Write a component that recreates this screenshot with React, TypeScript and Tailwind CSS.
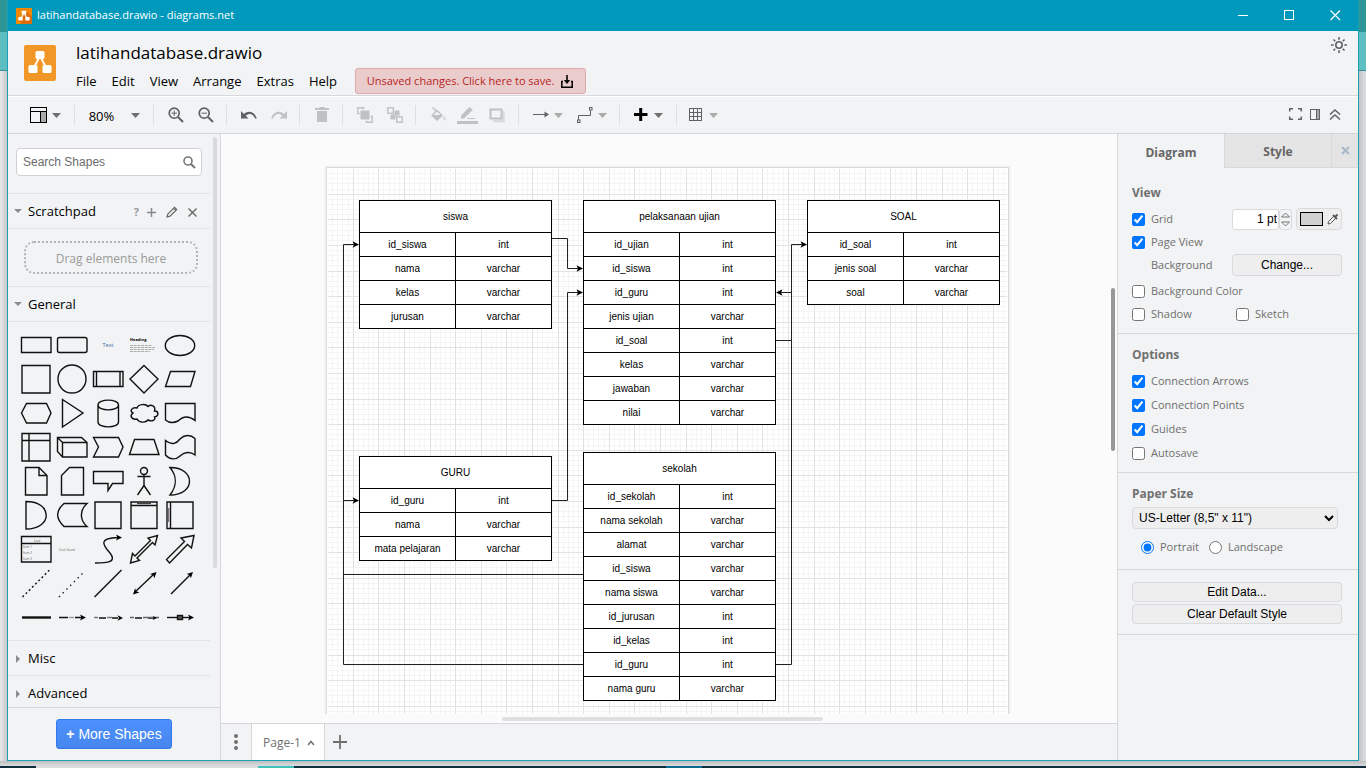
import React, { ReactNode } from "react";

const SANS = "font-['Open_Sans','Noto_Sans',sans-serif]";
const ARIAL = "font-['Liberation_Sans',Arial,sans-serif]";

/* ---------- window chrome ---------- */

function Logo({ className, small }: { className: string; small?: boolean }) {
  return (
    <svg className={className} viewBox="0 0 32 36" preserveAspectRatio="none" aria-hidden="true">
      <rect width="32" height="36" rx={small ? 0 : 2} fill={small ? "#f08705" : "#f19728"} />
      {small && <path d="M20 7L32 19V36H12L5 28L14 20Z" fill="#df6c0c" />}
      <path d="M15 13L9 24M17 13L23 24" stroke="#fff" strokeWidth={small ? 2.4 : 1.8} fill="none" />
      <rect x="11.500" y="6" width="9" height="8" rx="1.500" fill="#fff" />
      <rect x="4.500" y="20" width="9" height="8" rx="1.500" fill="#fff" />
      <rect x="18.500" y="20" width="9" height="8" rx="1.500" fill="#fff" />
    </svg>
  );
}

function TitleBar() {
  return (
    <div className="flex h-[31px] shrink-0 items-center bg-[#0099bc] text-white">
      <Logo small className="ml-2 h-4 w-4" />
      <span className="ml-[5px] flex-1 text-[11px]">latihandatabase.drawio - diagrams.net</span>
      <button aria-label="Minimize" className="flex h-full w-[46px] items-center justify-center">
        <svg width="11" height="11"><path d="M0 5.500H10" stroke="#fff" /></svg>
      </button>
      <button aria-label="Maximize" className="flex h-full w-[46px] items-center justify-center">
        <svg width="11" height="11"><rect x=".5" y=".5" width="9" height="9" fill="none" stroke="#fff" /></svg>
      </button>
      <button aria-label="Close" className="flex h-full w-[46px] items-center justify-center">
        <svg width="11" height="11"><path d="M.5 .5L10 10M10 .5L.5 10" stroke="#fff" strokeWidth="1.200" /></svg>
      </button>
    </div>
  );
}

function Header() {
  return (
    <header className="flex h-[65px] shrink-0 border-b border-[#d6d8dc] pl-4">
      <Logo className="mt-[14px] h-9 w-8" />
      <div className="ml-5 flex-1 pt-[10px]">
        <h1 className="h-6 text-[17px] leading-6 text-black">latihandatabase.drawio</h1>
        <nav className="mt-[3px] flex h-[26px] items-center gap-[15px] text-[13px] text-black">
          {["File", "Edit", "View", "Arrange", "Extras", "Help"].map((m) => (
            <button key={m} className="pt-[2px]">{m}</button>
          ))}
          <button className="ml-[3px] flex h-[26px] w-[231px] items-center justify-center gap-[6px] rounded-[3px] border border-[#dfa9ad] bg-[#ebcccd] pt-px text-[11px] text-[#b62623]">
            Unsaved changes. Click here to save.
            <svg width="14" height="14" className="text-black" fill="none" stroke="currentColor" aria-hidden="true">
              <path d="M3 6.500H1.800V12.200H12.200V6.500H11" strokeWidth="1.500" />
              <path d="M7 0V6" strokeWidth="1.600" />
              <path d="M3.800 5H10.200L7 9Z" fill="currentColor" stroke="none" />
            </svg>
          </button>
        </nav>
      </div>
      <button aria-label="Theme" className="mt-1 mr-2 h-5 w-5 self-start text-[#5f6368]">
        <svg width="18" height="18" viewBox="-9 -9 18 18" fill="none" stroke="currentColor" strokeWidth="1.600">
          <circle r="3.200" />
          <path d="M0-8V-5.300M0 8V5.300M-8 0H-5.300M8 0H5.300M-5.500-5.500L-3.800-3.800M5.500 5.500L3.800 3.800M-5.500 5.500L-3.800 3.800M5.500-5.500L3.800-3.800" />
        </svg>
      </button>
    </header>
  );
}

/* ---------- toolbar ---------- */

function Caret({ color = "#707070" }: { color?: string }) {
  return (
    <svg width="9" height="5" viewBox="0 0 9 5" className="shrink-0" aria-hidden="true">
      <path d="M0 0H9L4.500 5Z" fill={color} />
    </svg>
  );
}

function Group({ className, children }: { className: string; children: ReactNode }) {
  return <div className={`flex h-5 items-center border-r border-[#dcdee0] ${className}`}>{children}</div>;
}

function Tool({ label, w = 16, color = "#5f6368", caret, children }: { label: string; w?: number; color?: string; caret?: string; children: ReactNode }) {
  return (
    <button aria-label={label} className="flex items-center gap-[5px]">
      <svg width={w} height="16" viewBox={`0 0 ${w} 16`} className="overflow-visible" style={{ color }} fill="none" stroke="currentColor">{children}</svg>
      {caret && <Caret color={caret} />}
    </button>
  );
}

const OFF = "#c0c1c2";

function Toolbar() {
  return (
    <div className="flex h-[38px] shrink-0 items-center border-t border-b border-t-white border-b-[#d2d4d8]">
      <Group className="w-[67px] pl-[22px]">
        <Tool label="View" w={17} color="#000" caret="#707070">
          <rect x=".5" y=".5" width="16" height="15" />
          <path d="M0 4.500H17" />
          <rect x="11" y="5" width="5" height="10" fill="#aaa" stroke="none" />
          <path d="M10.500 4V16" />
        </Tool>
      </Group>
      <Group className="w-[79px] pl-[13px]">
        <button className="flex items-center gap-4 text-[13px] text-black">
          <span className="w-[27px] pt-[3px]">80%</span>
          <Caret />
        </button>
      </Group>
      <Group className="w-[73px] gap-[14px] pl-[14px]">
        <Tool label="Zoom in">
          <circle cx="6.200" cy="6.200" r="5" strokeWidth="1.700" /><path d="M10 10L15 15" strokeWidth="2" /><path d="M3.500 6.200H9M6.200 3.500V9" />
        </Tool>
        <Tool label="Zoom out">
          <circle cx="6.200" cy="6.200" r="5" strokeWidth="1.700" /><path d="M10 10L15 15" strokeWidth="2" /><path d="M3.500 6.200H9" />
        </Tool>
      </Group>
      <Group className="w-[73px] gap-[14px] pl-[14px]">
        <Tool label="Undo">
          <path d="M0 4V11.500H7.500L4.800 8.800C8 6 12 6.500 14.200 11.800L15.800 11.200C13.500 4.500 7.500 3 2.900 7Z" fill="currentColor" stroke="none" />
        </Tool>
        <Tool label="Redo" color={OFF}>
          <path d="M16 4V11.500H8.500L11.200 8.800C8 6 4 6.500 1.800 11.800L.2 11.200C2.500 4.500 8.500 3 13.100 7Z" fill="currentColor" stroke="none" />
        </Tool>
      </Group>
      <Group className="w-[43px] pl-[14px]">
        <Tool label="Delete" color={OFF}>
          <path d="M1 1H5L6 0H10L11 1H15V3H1ZM3 4H13V15H3Z" fill="currentColor" stroke="none" />
        </Tool>
      </Group>
      <Group className="w-[73px] gap-[14px] pl-[14px]">
        <Tool label="To front" color={OFF}>
          <rect x="3.500" y="3.500" width="9" height="9" fill="currentColor" stroke="none" />
          <path d="M2.500 6.500H.8V.8H6.500V2.500M9.500 13.500V15.200H15.200V9.500H13.500" strokeWidth="1.400" />
        </Tool>
        <Tool label="To back" color={OFF}>
          <path d="M3.500 7.500H7.500V3.500H12.500V8.500H8.500V12.500H3.500Z" fill="currentColor" stroke="none" />
          <rect x=".8" y=".8" width="5.500" height="5.500" strokeWidth="1.400" fill="#f1f3f4" />
          <rect x="9.700" y="9.700" width="5.500" height="5.500" strokeWidth="1.400" fill="#f1f3f4" />
        </Tool>
      </Group>
      <Group className="w-[103px] gap-[11px] pl-[14px]">
        <Tool label="Fill color" color={OFF}>
          <path d="M7 2.500L13 8.500L7 14L1.200 8.500Z" fill="currentColor" stroke="none" />
          <path d="M2.500 .5L8 5.500" strokeWidth="1.500" />
          <path d="M3.500 8H10.500L7 4.500Z" fill="#f1f3f4" stroke="none" />
          <path d="M14.200 8.500Q17.500 12.500 14.200 13.500Q11.500 12.500 14.200 8.500Z" fill="#d8d9da" stroke="none" />
        </Tool>
        <Tool label="Line color" w={21} color={OFF}>
          <path d="M4 11.500V8.500L12.500 0L15.800 3L7 11.500Z" fill="currentColor" stroke="none" /><path d="M10 11.500H18" /><path d="M0 15.500H21" strokeWidth="3" />
        </Tool>
        <Tool label="Shadow" color={OFF}>
          <path d="M4 14H14.500V4" stroke="#d8d9da" strokeWidth="2.400" /><rect x="1.500" y="2.500" width="11" height="9" strokeWidth="2" />
        </Tool>
      </Group>
      <Group className="w-[101px] gap-[14px] pl-[14px]">
        <Tool label="Connection" caret="#ababab"><path d="M0 7.500H12" /><path d="M11.500 4.500L16 7.500L11.500 10.500Z" fill="currentColor" stroke="none" /></Tool>
        <Tool label="Waypoints" caret="#ababab"><path d="M1.500 13V8.500H13.500V3.500" /><rect x=".5" y="13" width="2.500" height="2.500" /><rect x="12.500" y=".5" width="2.500" height="2.500" /></Tool>
      </Group>
      <Group className="w-[57px] pl-[14px]">
        <Tool label="Insert" w={15} color="#000" caret="#707070"><path d="M0 7.500H13.500M6.700 1V14" strokeWidth="3" /></Tool>
      </Group>
      <div className="flex flex-1 items-center pl-3">
        <Tool label="Table" w={15} caret="#ababab"><rect x=".5" y="1.500" width="12" height="12" /><path d="M0 5.500H13M0 9.500H13M4.500 1V14M8.500 1V14" /></Tool>
      </div>
      <div className="flex items-center gap-2 pr-[17px]">
        <Tool label="Fullscreen" w={13}><path d="M.7 4.500V1.700H4M9 1.700H12.300V4.500M12.300 9.500V12.300H9M4 12.300H.7V9.500" strokeWidth="1.500" /></Tool>
        <Tool label="Format panel" w={11}><rect x="7" y="3" width="3" height="9" fill="#aaa" stroke="none" /><rect x=".5" y="2.500" width="9" height="10" /><path d="M6.500 3V12" /></Tool>
        <Tool label="Collapse" w={12}><path d="M1 7.500L6 3L11 7.500M1 12.500L6 8L11 12.500" strokeWidth="1.500" /></Tool>
      </div>
    </div>
  );
}

/* ---------- shapes sidebar ---------- */

const arrowTip = (x: number, y: number, a: number, s = 1) => (
  <path d="M0 0L-6-3L-4.500 0L-6 3Z" fill="#000" stroke="none" transform={`translate(${x} ${y}) rotate(${a}) scale(${s})`} />
);

const SHAPES: [string, ReactNode][] = [
  ["Rectangle", <path d="M3.500 9.500H33V24.500H3.500Z" />],
  ["Rounded rectangle", <rect x="3.500" y="9.500" width="29.500" height="15" rx="2" />],
  ["Text", <text x="18" y="19" fontSize="5.500" textAnchor="middle" fill="#45659b" stroke="none">Text</text>],
  ["Textbox", <g stroke="none"><text x="4" y="13" fontSize="4" fontWeight="700" fill="#000">Heading</text><path d="M4 17.500H26M4 19.500H29M4 21.500H28M4 23.500H24" stroke="#999" strokeWidth=".8" strokeDasharray="3 .7" /></g>],
  ["Ellipse", <ellipse cx="18" cy="17.500" rx="14.700" ry="10" />],
  ["Square", <path d="M4 3.500H32V31H4Z" />],
  ["Circle", <circle cx="18" cy="17" r="14" />],
  ["Process", <path d="M3.500 9.500H33V24.500H3.500ZM6.500 9.500V24.500M30 9.500V24.500" />],
  ["Diamond", <path d="M18 3.500L32 17L18 31L4 17Z" />],
  ["Parallelogram", <path d="M8.500 9.500H33L28.500 24.500H3.500Z" />],
  ["Hexagon", <path d="M8.500 7.500H28.500L33 17L28.500 27H8.500L3.500 17Z" />],
  ["Triangle", <path d="M8.500 3.500L29 17L8.500 31Z" />],
  ["Cylinder", <path d="M8 9C8 2.500 28.500 2.500 28.500 9V26C28.500 32.500 8 32.500 8 26ZM8 9C8 15.500 28.500 15.500 28.500 9" />],
  ["Cloud", <path d="M11 12C6 11 3 15 7 17C3 20 6 24 11 23C13 27 20 27 22 24C26 26 30 24 28.500 21C33 20 33 15 28.500 15C30 10 25 8 22 10.500C20 7.500 12 8 11 12Z" />],
  ["Document", <path d="M3.500 7.500H33V24.500C25 18 19 22 16 25C12 27 7 27 3.500 24Z" />],
  ["Internal storage", <path d="M4 3.500H32V31H4ZM4 10.500H32M11 3.500V31" />],
  ["Cube", <path d="M3.500 7.500H27.500L33 12.500V27H8.500L3.500 21.500ZM3.500 7.500L8.500 12.500V27M8.500 12.500H33" />],
  ["Step", <path d="M3.500 7.500H28.500L33 17L28.500 27H3.500L8.500 17Z" />],
  ["Trapezoid", <path d="M8.500 9.500H28L33 24.500H3.500Z" />],
  ["Tape", <path d="M3.500 10.500C10 16 15 13 18 9C22 5 28 4 33 8.500V25C28 21 22 22 18 26C14 30 8 30 3.500 25Z" />],
  ["Note", <path d="M7.500 3.500H21L29 11.500V31H7.500ZM21 3.500V11.500H29" />],
  ["Card", <path d="M15.500 3.500H29.500V31H7.500V11.500Z" />],
  ["Callout", <path d="M3.500 7.500H33V19.500H22.500L18 26.500V19.500H3.500Z" />],
  ["Actor", <path d="M18 10.500V21.500M11.500 12.500H24.500M18 21.500L11.500 31M18 21.500L24.500 31M21.500 7A3.500 3.500 0 1 1 14.500 7A3.500 3.500 0 1 1 21.500 7" />],
  ["Or", <path d="M8 3.500C34 3.500 34 31 8 31C15 22 15 12 8 3.500Z" />],
  ["And", <path d="M8 3.500C35 3.500 35 31 8 31Z" />],
  ["Data storage", <path d="M10 5.500H33C25.500 12 25.500 22 33 28.500H10C1.500 20 1.500 13 10 5.500Z" />],
  ["Container", <path d="M5 4H31V30.500H5Z" />],
  ["Titled container", <g><path d="M5 4H31V30.500H5ZM5 7.500H31" /><path d="M11 5.500H25" stroke="#444" /></g>],
  ["Horizontal container", <g><path d="M5 4H31V30.500H5ZM8.500 4V30.500" /><path d="M6.700 10V24" stroke="#6b5560" strokeWidth="1" /></g>],
  ["List", <g><path d="M3.500 4.500H33V30H3.500ZM3.500 11.500H33" /><g stroke="none" fill="#555" fontSize="4"><text x="16" y="9.500">List</text><text x="5" y="16" fontSize="3">Item 1</text><text x="5" y="21.500" fontSize="3">Item 2</text><text x="5" y="27.500" fontSize="3">Item 3</text></g></g>],
  ["List item", <text x="5" y="18.500" fontSize="4" stroke="none" fill="#666">List Item</text>],
  ["Curve", <g><path d="M5 31C18 31 27 30 20 21C12 12 9 6 28 5.500" />{arrowTip(32, 5.500, 0)}</g>],
  ["Bidirectional arrow", <path d="M31.500 3.500L29 13L26.500 10.500L11 26L13.500 28.500L4.500 31L6.500 21.500L9 24L24.500 8.500L22 6Z" />],
  ["Arrow", <path d="M32 3.500L29.500 16L25.500 12.500L7.500 31L4.500 27.500L22.500 9.500L19 6Z" />],
  ["Dashed line", <path d="M4.500 31L31.500 4" strokeDasharray="2 2.500" />],
  ["Dotted line", <path d="M5 31L31 5" strokeDasharray="1.300 4" />],
  ["Line", <path d="M4.500 31L31.500 4" />],
  ["Bidirectional connector", <g><path d="M9 26L28 8" />{arrowTip(30.500, 6, -45)}{arrowTip(7, 28.500, 135)}</g>],
  ["Directional connector", <g><path d="M9 28L29 8" />{arrowTip(31, 6, -45)}</g>],
  ["Link", <path d="M4 17.500H33" strokeWidth="2.400" />],
  ["Labeled connector", <g><path d="M5 17.500H14M21 17.500H28" /><path d="M15 17.500H20" stroke="#999" />{arrowTip(32, 17.500, 0)}</g>],
  ["Connector with labels", <g><path d="M9 18H16M22 18H28" /><path d="M4 17.500H8M17 17.500H22" stroke="#777" />{arrowTip(33, 18, 0, 0.900)}</g>],
  ["Connector with three labels", <g><path d="M9 18H16M22 18H28" /><path d="M4 17.500H8M17 17.500H33" stroke="#666" />{arrowTip(31, 18, 0, 0.700)}</g>],
  ["Connector with symbol", <g><path d="M5 17.500H29" /><rect x="15.500" y="15.500" width="5" height="4" fill="#555" />{arrowTip(32, 17.500, 0)}</g>],
];

function SectionHead({ title, open, children }: { title: string; open?: boolean; children?: ReactNode }) {
  return (
    <div className="flex h-[35px] shrink-0 items-center border-b border-[#e1e3e6] pt-[2px] pl-[6px]">
      <button className="flex items-center gap-[6px] text-[13px] font-medium text-black">
        <svg width="8" height="8" viewBox="0 0 8 8" fill="#8c8c8c" aria-hidden="true">
          <path d={open ? "M0 1H8L4 5Z" : "M2 0L6 4L2 8Z"} />
        </svg>
        {title}
      </button>
      {children}
    </div>
  );
}

function Sidebar() {
  return (
    <aside className="flex w-[213px] shrink-0 flex-col border-r border-[#d6d8dc]">
      <div className="flex min-h-0 flex-1">
        <div className="flex w-[202px] flex-col overflow-hidden">
          <div className="h-[60px] shrink-0 border-b border-[#e1e3e6] pt-[14px] pl-2">
            <label className={`flex h-7 w-[186px] items-center rounded-[4px] border border-[#cfd1d4] bg-white pr-[5px] pl-[6px] ${ARIAL}`}>
              <input aria-label="Search Shapes" placeholder="Search Shapes" className="min-w-0 flex-1 text-[12px] outline-none placeholder:text-[#6b6b6b]" />
              <svg width="13" height="13" viewBox="0 0 13 13" fill="none" stroke="#777" aria-hidden="true">
                <circle cx="5" cy="5" r="4" strokeWidth="1.600" /><path d="M8 8L12 12" strokeWidth="2.200" />
              </svg>
            </label>
          </div>
          <SectionHead title="Scratchpad" open>
            <div className="ml-auto flex items-center gap-2 pr-[13px] text-[#777]">
              <button className="text-[11px] font-bold text-[#999]">?</button>
              <button aria-label="Add"><svg width="9" height="9" stroke="#888"><path d="M0 4.500H9M4.500 0V9" strokeWidth="1.500" /></svg></button>
              <button aria-label="Edit" className="ml-[2px]"><svg width="12" height="12" viewBox="0 0 12 12" fill="none" stroke="#666"><path d="M1 11L1.800 8L8.500 1.300L10.700 3.500L4 10.200ZM7.500 2.300L9.700 4.500" strokeWidth="1.200" /></svg></button>
              <button aria-label="Close scratchpad" className="ml-[2px]"><svg width="9" height="9" stroke="#666"><path d="M.5 .5L8.500 8.500M8.500 .5L.5 8.500" strokeWidth="1.400" /></svg></button>
            </div>
          </SectionHead>
          <div className="flex h-[58px] shrink-0 items-center border-b border-[#e1e3e6] pl-4">
            <div className="flex h-[33px] w-[174px] items-center justify-center rounded-[10px] border-2 border-dotted border-[#b5b5b5] pt-[2px] text-[12px] text-[#9a9a9a]">Drag elements here</div>
          </div>
          <SectionHead title="General" open />
          <div className="grid shrink-0 grid-cols-[repeat(5,36px)] border-b border-[#e1e3e6] py-[6px] pl-[10px]">
            {SHAPES.map(([name, art]) => (
              <button key={name} aria-label={name} className="h-[34px] w-9">
                <svg width="36" height="34" viewBox="0 0 36 34" fill="none" stroke="#111" strokeWidth="1.400">{art}</svg>
              </button>
            ))}
          </div>
          <SectionHead title="Misc" />
          <SectionHead title="Advanced" />
        </div>
        <div className="mt-[3px] ml-[3px] h-[431px] w-1 rounded-full bg-[#d9dadc]" />
      </div>
      <div className="flex h-[53px] shrink-0 items-center justify-center border-t border-[#d6d8dc]">
        <button className={`h-[30px] w-[116px] rounded-[3px] border border-[#3079ed] bg-linear-to-b from-[#4d90fe] to-[#4787ed] text-[14px] text-white ${ARIAL}`}>
          <span className="font-bold">+</span> More Shapes
        </button>
      </div>
    </aside>
  );
}

/* ---------- diagram ---------- */

type Entity = { name: string; place: string; rows: [string, string][] };

const ENTITIES: Entity[] = [
  { name: "siswa", place: "left-[33px] top-[33px]", rows: [["id_siswa", "int"], ["nama", "varchar"], ["kelas", "varchar"], ["jurusan", "varchar"]] },
  { name: "pelaksanaan ujian", place: "left-[257px] top-[33px]", rows: [["id_ujian", "int"], ["id_siswa", "int"], ["id_guru", "int"], ["jenis ujian", "varchar"], ["id_soal", "int"], ["kelas", "varchar"], ["jawaban", "varchar"], ["nilai", "varchar"]] },
  { name: "SOAL", place: "left-[481px] top-[33px]", rows: [["id_soal", "int"], ["jenis soal", "varchar"], ["soal", "varchar"]] },
  { name: "GURU", place: "left-[33px] top-[289px]", rows: [["id_guru", "int"], ["nama", "varchar"], ["mata pelajaran", "varchar"]] },
  { name: "sekolah", place: "left-[257px] top-[285px]", rows: [["id_sekolah", "int"], ["nama sekolah", "varchar"], ["alamat", "varchar"], ["id_siswa", "varchar"], ["nama siswa", "varchar"], ["id_jurusan", "int"], ["id_kelas", "int"], ["id_guru", "int"], ["nama guru", "varchar"]] },
];

function EntityTable({ name, place, rows }: Entity) {
  return (
    <table className={`absolute w-[193px] table-fixed border-separate border-spacing-0 border-t border-l border-black bg-white text-center text-[10px] leading-3 text-black ${ARIAL} ${place}`}>
      <thead>
        <tr><th colSpan={2} className="h-8 border-r border-b border-black p-0 font-normal">{name}</th></tr>
      </thead>
      <tbody>
        {rows.map(([field, type]) => (
          <tr key={field}>
            <td className="h-6 border-r border-b border-black p-0">{field}</td>
            <td className="h-6 border-r border-b border-black p-0">{type}</td>
          </tr>
        ))}
      </tbody>
    </table>
  );
}

const EDGES: { d: string; tip: [number, number, number] }[] = [
  { d: "M226 71.500H241.500V101.500H252", tip: [257, 101.5, 0] },
  { d: "M226 333.500H241.500V125.500H252", tip: [257, 125.5, 0] },
  { d: "M450 173.500H465.500V77.500H476", tip: [481, 77.5, 0] },
  { d: "M450 497.500H465.500V125.500H455", tip: [450, 125.5, 180] },
  { d: "M257 407.500H17.500V77.500H28", tip: [33, 77.5, 0] },
  { d: "M257 497.500H17.500V333.500H28", tip: [33, 333.5, 0] },
];

const PAGE_W = 683;
const PAGE_H = 883;

function gridPath(major: boolean) {
  let d = "";
  for (let i = 1; 1.6 + i * 5.12 < PAGE_H; i++) {
    if ((i % 5 === 0) !== major) continue;
    const p = Math.floor(1.6 + i * 5.12) + 0.5;
    if (p < PAGE_W - 2) d += `M${p} 2V${PAGE_H}`;
    d += `M2 ${p}H${PAGE_W - 2}`;
  }
  return d;
}

function Canvas() {
  return (
    <main className="flex min-w-0 flex-1 flex-col bg-[#fbfbfb]">
      <div className="flex min-h-0 flex-1">
        <div className="min-w-0 flex-1 overflow-hidden pt-[33px] pl-[105px]">
          <div className="relative h-[883px] w-[683px] border border-[#d9d9d9] bg-white shadow-[0_0_2px_1px_#ececec]">
            <svg className="absolute -top-px -left-px" width={PAGE_W} height={PAGE_H} fill="none" aria-hidden="true">
              <path d={gridPath(false)} stroke="#f5f5f5" />
              <path d={gridPath(true)} stroke="#e2e2e2" />
            </svg>
            <div className="absolute -top-px -left-px">
              {ENTITIES.map((e) => <EntityTable key={e.name} {...e} />)}
              <svg className="absolute top-0 left-0" width={PAGE_W} height={PAGE_H} fill="none" stroke="#222" aria-hidden="true">
                {EDGES.map(({ d, tip: [x, y, a] }) => (
                  <g key={d}>
                    <path d={d} />
                    <path d="M0 0L-6.500-3.200L-5 0L-6.500 3.200Z" fill="#000" stroke="none" transform={`translate(${x} ${y}) rotate(${a})`} />
                  </g>
                ))}
              </svg>
            </div>
          </div>
        </div>
        <div className="mt-[154px] mr-[2px] h-[163px] w-1 rounded-full bg-[#979797]" />
      </div>
      <div className="h-[9px] shrink-0 pt-[3px]">
        <div className="ml-[281px] h-1 w-[321px] rounded-full bg-[#dfdfdf]" />
      </div>
      <footer className="flex h-[37px] shrink-0 border-t border-[#d6d8dc] bg-[#f1f3f4] text-[12px] text-[#707070]">
        <button aria-label="Pages" className="flex w-[31px] items-center justify-center border-r border-[#d6d8dc]">
          <svg width="4" height="16" fill="#707070"><circle cx="2" cy="2" r="2" /><circle cx="2" cy="8" r="2" /><circle cx="2" cy="14" r="2" /></svg>
        </button>
        <button className="flex w-[73px] items-center justify-center gap-[6px] border-r border-[#d6d8dc] bg-white pt-[2px] pl-[2px]">
          Page-1
          <svg width="8" height="6" fill="none" stroke="#707070"><path d="M1 5L4 1.500L7 5" strokeWidth="1.500" /></svg>
        </button>
        <button aria-label="Insert page" className="flex w-[30px] items-center justify-center">
          <svg width="14" height="14" stroke="#707070"><path d="M0 7H14M7 0V14" strokeWidth="1.800" /></svg>
        </button>
      </footer>
    </main>
  );
}

/* ---------- format panel ---------- */

function Check({ label, on, className = "" }: { label: string; on?: boolean; className?: string }) {
  return (
    <label className={`flex items-center gap-[6px] ${className}`}>
      <input type="checkbox" defaultChecked={on} className="h-[13px] w-[13px]" />
      {label}
    </label>
  );
}

const BTN = "rounded-[4px] border border-[#d8dadd] bg-[#eeeeee] text-[12px] text-black font-['Liberation_Sans',Arial,sans-serif]";

function FormatPanel() {
  return (
    <aside className="flex w-[241px] shrink-0 flex-col border-l border-[#d6d8dc] text-[11px] text-[#707070]">
      <div className="flex h-[34px] text-[12px] font-bold text-[#666]">
        <button className="flex-1 pt-1">Diagram</button>
        <button className="flex-1 border-b border-l border-[#d6d8dc] bg-[#e4e4e4] pt-[2px]">Style</button>
        <button aria-label="Close panel" className="flex w-[27px] items-center justify-center border-b border-l border-[#d6d8dc] bg-[#e4e4e4]">
          <svg width="9" height="9" stroke="#a9b9cc"><path d="M1 1L8 8M8 1L1 8" strokeWidth="2" /></svg>
        </button>
      </div>
      <section className="h-[166px] border-b border-[#d6d8dc] pt-[13px] pr-4 pl-[14px]">
        <h2 className="h-6 text-[12px] leading-6 font-bold">View</h2>
        <div className="flex h-7 items-center">
          <Check label="Grid" on />
          <input aria-label="Grid size" defaultValue="1 pt" className={`ml-auto h-[21px] w-[47px] rounded-[3px] border border-[#d8dadd] bg-white pr-px text-right text-[12px] text-black ${ARIAL}`} />
          <div className="flex h-[21px] w-[13px] flex-col rounded-[3px] border border-[#d8dadd]">
            {["M1.500 7L5.500 3L9.500 7Z", "M1.500 3L5.500 7L9.500 3Z"].map((d, i) => (
              <button key={d} aria-label={i ? "Decrease" : "Increase"} className="flex-1">
                <svg width="11" height="9" fill="none" stroke="#777"><path d={d} /></svg>
              </button>
            ))}
          </div>
          <button aria-label="Grid color" className={`ml-1 flex h-[22px] w-[46px] items-center gap-1 pl-[3px] ${BTN}`}>
            <span className="h-[14px] w-[23px] border border-black bg-[#d0d0d0]" />
            <svg width="12" height="12" viewBox="0 0 12 12" fill="none" stroke="#555"><path d="M1 11L1.500 8.500L7 3L9 5L3.500 10.500Z" /><path d="M6 2L10 6M8 4L10.500 1.500" strokeWidth="1.800" /></svg>
          </button>
        </div>
        <Check label="Page View" on className="h-[18px]" />
        <div className="flex h-7 items-center justify-between pl-[19px]">
          Background
          <button className={`h-[22px] w-[110px] ${BTN}`}>Change...</button>
        </div>
        <Check label="Background Color" className="h-6" />
        <div className="flex h-[22px] items-center">
          <Check label="Shadow" className="w-[104px]" />
          <Check label="Sketch" />
        </div>
      </section>
      <section className="h-[139px] border-b border-[#d6d8dc] px-[14px] pt-[9px]">
        <h2 className="h-[26px] text-[12px] leading-6 font-bold">Options</h2>
        <Check label="Connection Arrows" on className="h-6" />
        <Check label="Connection Points" on className="h-6" />
        <Check label="Guides" on className="h-6" />
        <Check label="Autosave" className="h-6" />
      </section>
      <section className="h-[97px] border-b border-[#d6d8dc] px-[14px] pt-[9px]">
        <h2 className="h-[25px] text-[12px] leading-6 font-bold">Paper Size</h2>
        <select aria-label="Paper Size" className={`h-[22px] w-[206px] pl-[2px] ${BTN}`}>
          <option>US-Letter (8,5" x 11")</option>
        </select>
        <div className="flex h-9 items-center gap-[10px] pl-[9px]">
          <label className="flex items-center gap-[6px]"><input type="radio" name="orientation" defaultChecked className="h-[13px] w-[13px]" />Portrait</label>
          <label className="flex items-center gap-[6px]"><input type="radio" name="orientation" className="h-[13px] w-[13px]" />Landscape</label>
        </div>
      </section>
      <section className="flex h-[65px] flex-col gap-[2px] border-b border-[#d6d8dc] pt-3 pr-4 pl-[14px]">
        <button className={`h-5 leading-[18px] ${BTN}`}>Edit Data...</button>
        <button className={`h-5 leading-[18px] ${BTN}`}>Clear Default Style</button>
      </section>
    </aside>
  );
}

/* ---------- desktop behind the window ---------- */

function DesktopEdge({ shade }: { shade: string }) {
  return (
    <div className="flex w-[7px] shrink-0 flex-col">
      <div className="h-8 bg-[#2f9698]" />
      <div className="h-[39px] border-b border-[#3c9092] bg-[#5dbfc1]" />
      <div className={`flex-1 ${shade}`} />
    </div>
  );
}

export default function App() {
  return (
    <div className={`flex h-screen w-full flex-col overflow-hidden ${SANS}`}>
      <div className="flex min-h-0 flex-1">
        <DesktopEdge shade="bg-linear-to-r from-[#e9e9eb] to-[#c9c9cb]" />
        <div className="flex min-w-0 flex-1 flex-col border-x border-b border-[#1a9fb5] bg-[#f1f3f4]">
          <TitleBar />
          <Header />
          <Toolbar />
          <div className="flex min-h-0 flex-1">
            <Sidebar />
            <Canvas />
            <FormatPanel />
          </div>
        </div>
        <DesktopEdge shade="bg-linear-to-r from-[#c3c4c8] to-[#dedfe3]" />
      </div>
      <div className="h-[5px] shrink-0 bg-linear-to-b from-[#bcbec0] to-[#dcdcde]" />
      <div className="flex h-[2px] shrink-0 bg-[#0f2e3b]">
        <div className="ml-9 w-[222px] bg-[#dcdcde]" />
        <div className="w-9 bg-[#3fc0bb]" />
        <div className="ml-[372px] w-9 bg-[#0c6a90]" />
      </div>
    </div>
  );
}
